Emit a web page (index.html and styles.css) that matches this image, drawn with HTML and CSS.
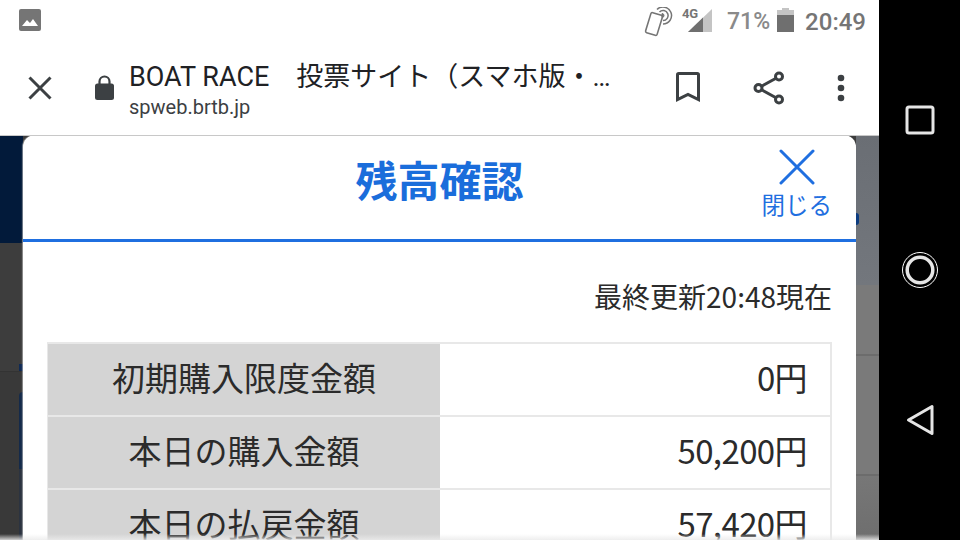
FILE: index.html
```html
<!doctype html>
<html lang="ja">
<head>
  <meta charset="utf-8" />
  <meta name="viewport" content="width=device-width,initial-scale=1" />
  <title>残高確認</title>
  <link rel="stylesheet" href="styles.css">
</head>
<body>
  <div class="screen">
    <header class="chrome">
      <div class="status">
        <svg class="ic-photo" width="22" height="22" viewBox="0 0 22 22"><rect width="22" height="22" rx="2" fill="#757575"/><path d="M3 17l5-6 3 3 3-4 5 7z" fill="#fff"/></svg>
        <div class="status-right">
          <svg class="ic-beam" width="30" height="30" viewBox="0 0 30 30" fill="none" stroke="#757575"><rect x="4" y="6.500" width="12" height="21" rx="1.500" transform="rotate(17 10 17)" fill="#fff" stroke-width="1.600"/><path d="M13 2.500A8.500 8.500 0 1 1 19 17M15.500 5A5 5 0 1 1 19 13.500" stroke-width="1.500"/><path d="M18 6.500a2 2 0 0 1 0 4z" fill="#757575" stroke-width="1"/></svg>
          <div class="net">
            <span class="net-label">4G</span>
            <svg width="24" height="23" viewBox="0 0 24 23"><path d="M0 23L24 0v23z" fill="#c4c4c4"/><path d="M0 23L15 8.600V23z" fill="#6f6f6f"/></svg>
          </div>
          <span class="pct">71%</span>
          <svg class="ic-batt" width="17" height="24" viewBox="0 0 17 24"><path d="M5 0h7v2h5v22H0V2h5z" fill="#c4c4c4"/><path d="M0 7h17v17H0z" fill="#6f6f6f"/></svg>
          <span class="clock">20:49</span>
        </div>
      </div>
      <div class="toolbar">
        <svg class="ic-close" width="26" height="26" viewBox="0 0 26 26" stroke="#3c4043" stroke-width="3"><path d="M2.500 2.500l21 21M23.500 2.500l-21 21"/></svg>
        <svg class="ic-lock" width="19" height="25" viewBox="0 0 19 25"><path d="M4.500 10V6.500a5 5 0 0 1 10 0V10" fill="none" stroke="#3c4043" stroke-width="2.200"/><rect y="8.500" width="19" height="16.500" rx="2.500" fill="#3c4043"/></svg>
        <div class="page-info">
          <div class="page-title">BOAT RACE　投票サイト（スマホ版・…</div>
          <div class="page-url">spweb.brtb.jp</div>
        </div>
        <svg class="ic-mark" width="24" height="30" viewBox="0 0 24 30"><path d="M1.500 27.500V2.800q0-1.300 1.300-1.300h18.400q1.300 0 1.300 1.300v24.700L12 22.500z" fill="none" stroke="#3c4043" stroke-width="3"/></svg>
        <svg class="ic-share" width="32" height="34" viewBox="0 0 32 34" fill="none" stroke="#3c4043" stroke-width="3"><circle cx="5.500" cy="17" r="3.500"/><circle cx="26" cy="5.500" r="3.500"/><circle cx="26" cy="28.500" r="3.500"/><path d="M8.500 15.300l14.500-8M8.500 18.700l14.500 8"/></svg>
        <svg class="ic-more" width="8" height="28" viewBox="0 0 8 28" fill="#3c4043"><circle cx="4" cy="4" r="3.300"/><circle cx="4" cy="14" r="3.300"/><circle cx="4" cy="24" r="3.300"/></svg>
      </div>
    </header>

    <div class="page">
      <div class="side side-left">
        <div class="bg-navy"></div>
        <div class="bg-dark"><i class="chip"></i></div>
        <div class="bg-darker"><i class="sliver"></i></div>
      </div>

      <main class="modal">
        <div class="modal-head">
          <h1>残高確認</h1>
          <div class="close-btn">
            <svg width="36" height="36" viewBox="0 0 36 36" stroke="#1f6fe0" stroke-width="3" stroke-linecap="round"><path d="M2 2l32 32M34 2L2 34"/></svg>
            <span>閉じる</span>
          </div>
        </div>
        <div class="modal-body">
          <p class="updated">最終更新20:48現在</p>
          <table class="balance">
            <tr><th>初期購入限度金額</th><td>0円</td></tr>
            <tr><th>本日の購入金額</th><td>50,200円</td></tr>
            <tr><th>本日の払戻金額</th><td>57,420円</td></tr>
          </table>
        </div>
      </main>

      <div class="side side-right">
        <div class="bg-slate"><i class="dot"></i></div>
        <div class="bg-row r1"></div>
        <div class="bg-row r2"></div>
        <div class="bg-row r3"></div>
      </div>
      <div class="bottom-fade"></div>
    </div>
  </div>

  <nav class="navbar">
    <div class="nav-item"><svg width="30" height="30" viewBox="0 0 30 30"><rect x="2" y="2" width="26" height="26" rx="2" fill="none" stroke="#e6e6e6" stroke-width="3"/></svg></div>
    <div class="nav-item"><svg width="38" height="38" viewBox="0 0 38 38" fill="none"><circle cx="19" cy="19" r="17.500" stroke="#fff" stroke-width="1"/><circle cx="19" cy="19" r="12.800" stroke="#e6e6e6" stroke-width="3.500"/></svg></div>
    <div class="nav-item"><svg width="28" height="32" viewBox="0 0 28 32"><path d="M26 2.500v27L2.500 16z" fill="none" stroke="#e6e6e6" stroke-width="3" stroke-linejoin="round"/></svg></div>
  </nav>
</body>
</html>
```

FILE: styles.css
```css
:root{
  --blue:#1a6ddb;
  --icon:#3c4043;
  --status:#757575;
  --text:#2b2b2b;
  --line:#e8e8e8;
}
html,body{height:100%;margin:0;overflow:hidden}
body{display:flex;width:960px;height:540px;background:#000;color:var(--text);font-family:"Noto Sans CJK JP","Noto Sans",sans-serif}
.screen{width:879px;height:540px;display:flex;flex-direction:column;background:#fff}

/* browser chrome */
.chrome{height:135px;flex:none;background:#fff}
.status{height:42px;display:flex;align-items:flex-start;padding:9px 13px 0 19px;box-sizing:border-box}
.status-right{margin-left:auto;display:flex;align-items:flex-start}
.ic-beam{margin-top:-2px}
.net{position:relative;margin-left:14px;width:24px;height:23px}
.net svg{display:block}
.net-label{position:absolute;left:-6px;top:-2px;font:700 13px/13px "Roboto",sans-serif;color:var(--status);letter-spacing:-.3px}
.pct{margin-left:15px;font:500 23px/26px "Roboto",sans-serif;color:#8a8a8a}
.ic-batt{margin:-1px 0 0 7px}
.clock{margin-left:11px;font:500 24px/26px "Roboto",sans-serif;color:var(--status)}

.toolbar{height:93px;display:flex;align-items:center;padding-left:27px;box-sizing:border-box}
.ic-close{margin-top:-2px}
.ic-lock{margin-left:42px;margin-top:-3px}
.page-info{margin-left:15px;width:535px;margin-top:1px}
.page-title{font:400 27px/36px "Roboto","Noto Sans CJK JP",sans-serif;color:#202124;white-space:nowrap}
.page-url{margin-top:-1px;font:400 20px/26px "Roboto",sans-serif;color:#3c4043}
.ic-mark{margin-left:12px;margin-top:-3px}
.ic-share{margin-left:53px;margin-top:-2px}
.ic-more{margin-left:52px;margin-top:-2px}

/* page behind the dialog */
.page{flex:1;display:flex;position:relative;overflow:hidden;background:#3c3c3c}
.page::before{content:"";position:absolute;left:0;right:0;top:0;height:1px;background:#c8c8c8;z-index:2}
.side{flex:none;display:flex;flex-direction:column;height:405px}
.side-left{width:23px}
.side-right{width:23px}
.bg-navy{height:108px;background:#021a3a}
.bg-dark{height:129px;background:#3d3d3d;display:flex;justify-content:flex-end;align-items:flex-end}
.chip{width:4px;height:7px;background:#0f2a55}
.bg-darker{flex:1;background:#393939;border-top:1px solid #333;padding-top:20px;display:flex;justify-content:flex-end}
.sliver{width:4px;height:148px;background:linear-gradient(#142a4a 52%,#2b3340 52%);border-top-left-radius:6px}
.bg-slate{height:150px;background:linear-gradient(#6a6e74,#73777d);position:relative}
.dot{position:absolute;left:0;top:78px;width:3px;height:12px;border-radius:0 6px 6px 0;background:#0c3c80}
.bg-row{background:#7a7a7a;border-bottom:2px solid #6c6c6c}
.r1{height:69px}
.r2{height:118px}
.r3{flex:1;border:0;background:linear-gradient(#777,#6e6e6e)}
.bottom-fade{position:absolute;left:0;right:0;bottom:0;height:6px;background:linear-gradient(rgba(255,255,255,0),rgba(235,235,235,.85))}

/* dialog */
.modal{flex:1;min-width:0;background:#fff;border-radius:12px 12px 0 0;box-shadow:-1px 0 1px rgba(200,200,200,.6);display:flex;flex-direction:column}
.modal-head{height:107px;flex:none;box-sizing:border-box;border-bottom:3px solid #1f6fe0;position:relative;display:flex;justify-content:center}
.modal-head h1{margin:15px 0 0;font-size:42px;line-height:58px;font-weight:700;color:var(--blue)}
.close-btn{position:absolute;right:24px;top:14px;display:flex;flex-direction:column;align-items:center;color:#1f6fe0;font-size:23.500px;line-height:34px}
.close-btn svg{display:block;margin-bottom:2px}
.modal-body{padding:0 24px}
.updated{margin:34px 0 0;height:66px;text-align:right;font-size:28px;line-height:40px}
.balance{width:100%;border-collapse:collapse;table-layout:fixed;font-size:33px}
.balance th,.balance td{height:65px;padding:0 0 6px;border:2px solid var(--line);line-height:46px}
.balance th{width:392px;background:#d4d4d4;font-weight:400;border-left-width:1px;border-right:0}
.balance td{text-align:right;padding-right:23px;border-left:0;letter-spacing:-.6px}

/* android nav */
.navbar{width:81px;flex:none;display:flex;flex-direction:column;justify-content:center;background:#000}
.nav-item{height:150px;display:flex;align-items:center;justify-content:center}
```
